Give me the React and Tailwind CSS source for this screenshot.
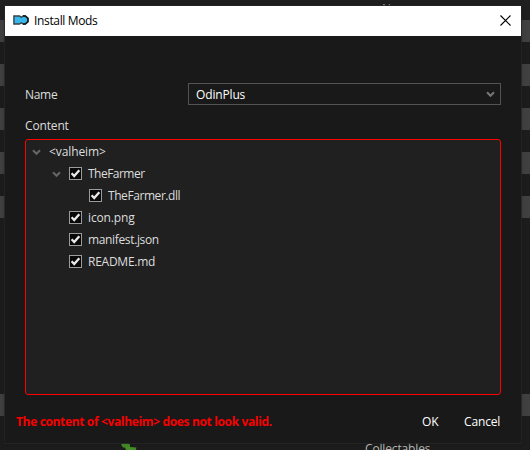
import React from 'react';

const STRIPES = [1, 3, 5, 7, 9, 18];

function Backdrop() {
  return (
    <div className="flex h-[450px] w-[530px] flex-col overflow-hidden bg-[#1c1c1c]">
      <div className="h-5 shrink-0 bg-[#1f1f1f] pl-[382px] pt-px">
        <div className="h-4 text-[12px] leading-4 text-[#a0a0a0]">Name</div>
      </div>
      {Array.from({ length: 18 }, (_, i) => (
        <div
          key={i}
          className={STRIPES.includes(i + 1) ? 'h-[22px] shrink-0 bg-[#404040]' : 'h-[22px] shrink-0'}
        />
      ))}
      <div className="flex h-[34px] shrink-0 items-start">
        <svg className="ml-[120px] mt-[27px] h-[7px] w-[18px]" viewBox="0 0 18 7">
          <path d="M1 1.500 3 .3h5l2 1.200v2.500l6.500 .5-.8 2L17 7H6L5 4.500H3z" fill="#438c26" />
        </svg>
        <span className="ml-[227px] mt-[25px] text-[12px] leading-4 tracking-[-0.15px] text-[#b8b8b8]">Collectables</span>
      </div>
    </div>
  );
}

function Chevron({ className }) {
  return (
    <svg className={className} width="9" height="7" viewBox="0 0 9 7" fill="none">
      <path d="M1 1.300 4.500 4.800 8 1.300" stroke="currentColor" strokeWidth="2" />
    </svg>
  );
}

function Checkbox() {
  return (
    <span className="mb-px flex h-[13px] w-[13px] shrink-0 items-center justify-center border border-[#9b9b9b] bg-[#080808]">
      <svg width="11" height="11" viewBox="0 0 11 11" fill="none">
        <path d="M1.600 5.300 4.200 8.100 9.300 2.200" stroke="#e8e8e8" strokeWidth="2.300" />
      </svg>
    </span>
  );
}

function FileRow({ label, className, open }) {
  return (
    <div className={`flex h-[22px] items-center ${className}`}>
      {open && <Chevron className="mr-2 shrink-0 text-[#666666]" />}
      <Checkbox />
      <span className="ml-[6px]">{label}</span>
    </div>
  );
}

function Logo() {
  return (
    <svg className="mb-[2px] h-[10px] w-[16px] shrink-0" viewBox="0 0 16 10">
      <path
        d="M.9 1H6.500L8.300 2.300 10 1H12.300L15 3.400V6.600L12.300 9H10L8.300 7.800 6.500 9H.9Z"
        fill="#39b6ea"
        stroke="#34444b"
        strokeWidth="1.400"
      />
      <path d="M10 1h2.300L15 3.400V6.600L12.300 9H10" fill="none" stroke="#10171a" strokeWidth="1.400" />
    </svg>
  );
}

export default function App() {
  return (
    <div className="relative h-[450px] w-[530px] overflow-hidden font-['Open_Sans','Noto_Sans',sans-serif] text-[12px] leading-4 tracking-[-0.15px] text-[#dddddd]">
      <Backdrop />
      <div className="absolute left-1 top-[5px] flex h-[439px] w-[518px] flex-col border border-[#262626]/80 bg-[#191919] bg-clip-padding shadow-[0_0_4px_rgba(0,0,0,0.15)]">
        <header className="flex h-[30px] shrink-0 items-center bg-white pl-2 text-black">
          <Logo />
          <span className="ml-[5px] tracking-[-0.35px]">Install Mods</span>
          <svg className="ml-auto mr-[10px] mb-[1px]" width="11" height="11" viewBox="0 0 11 11">
            <path d="M.5 .5 10.500 10.500M10.500 .5 .5 10.500" stroke="#000" strokeWidth="1.100" />
          </svg>
        </header>
        <div className="mx-5 mt-[47px] flex h-[22px] shrink-0 items-center">
          <span className="w-[163px] pt-0.5 tracking-[-0.3px]">Name</span>
          <div className="flex h-full w-[313px] items-center border border-[#535353] pl-[7px] pr-[5px] text-white">
            <span className="pt-px">OdinPlus</span>
            <Chevron className="ml-auto text-[#777777]" />
          </div>
        </div>
        <div className="ml-5 mt-[13px] h-4 shrink-0">Content</div>
        <div className="ml-5 mt-[5px] h-[256px] w-[476px] shrink-0 rounded-[3px] border border-[#ff0000] bg-[#202020] pt-px">
          <div className="flex h-[22px] items-center pl-[6px]">
            <Chevron className="text-[#666666]" />
            <span className="ml-2 tracking-[-0.1px]">&lt;valheim&gt;</span>
          </div>
          <FileRow label="TheFarmer" className="pl-[26px] tracking-[-0.52px]" open />
          <FileRow label="TheFarmer.dll" className="pl-[63px] tracking-[-0.43px]" />
          <FileRow label="icon.png" className="pl-[43px] tracking-[-0.15px]" />
          <FileRow label="manifest.json" className="pl-[43px] tracking-[-0.35px]" />
          <FileRow label="README.md" className="pl-[43px] tracking-[-0.25px]" />
        </div>
        <footer className="mt-[19px] flex h-4 shrink-0 items-center pl-[11px]">
          <span className="w-[406px] whitespace-nowrap font-bold tracking-[-0.35px] text-[#f80000]">
            The content of &lt;valheim&gt; does not look valid.
          </span>
          <span className="w-[42px] text-white">OK</span>
          <span className="text-white">Cancel</span>
        </footer>
      </div>
    </div>
  );
}
